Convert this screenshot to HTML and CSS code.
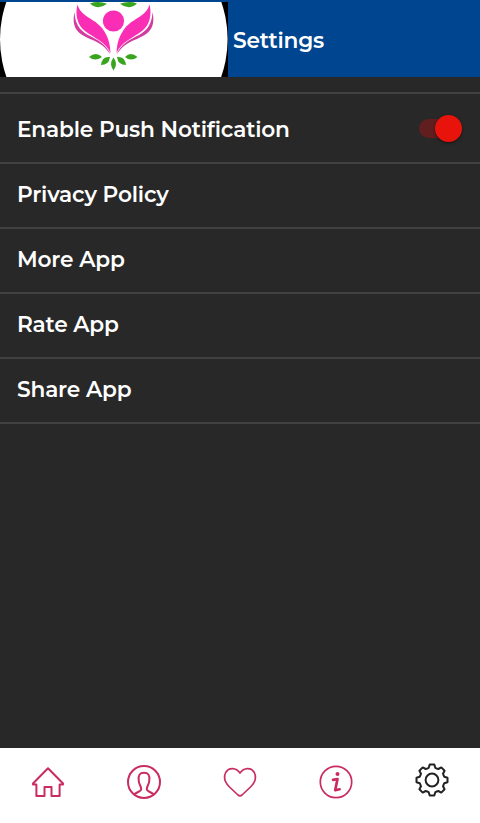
FILE: index.html
```html
<!DOCTYPE html>
<html lang="en">
<head>
<meta charset="utf-8">
<title>Settings</title>
<link rel="stylesheet" href="styles.css">
</head>
<body>
<div class="app">
  <header class="header">
    <svg class="logo" viewBox="0 2 228 75" aria-hidden="true">
      <path fill="#000" d="M0 2h228v75H0z"/>
      <circle cx="113.8" cy="39.3" r="113.8" fill="#fff"/>
      <g fill="#39a51f">
        <path d="M90 3.500Q98 .5 107 3.800Q98 11 90 3.500zM120 3.800Q129 .5 137 3.500Q129 11 120 3.800z"/>
        <path d="M89 57Q96 51 102 57Q95 62 89 57zM137.500 57Q130.500 51 125 57Q131 62 137.500 57zM101 65Q102 56 110 57Q109 65 101 65zM126 65Q125 56 117 57Q118 65 126 65zM113.500 57.500Q108.500 64 113.500 70.500Q118.500 64 113.500 57.500z"/>
      </g>
      <circle cx="113.500" cy="21" r="10.600" fill="#f92eb4"/>
      <g fill="#f92eb4">
        <path d="M77.500 4.500C81 17 94 18 102 28C108 36 110 43 110.500 53C106 42 94 38 85 31C77 25 75 14 77.500 4.500z"/>
        <path d="M149.500 4.500C146 17 133 18 125 28C119 36 117 43 116.500 53C121 42 133 38 142 31C150 25 152 14 149.500 4.500z"/>
      </g>
      <g fill="#d33b9f">
        <path d="M74.500 12C71 29 79 34 90 39C101 43 106 48 110.500 54.500C106 44 98 40 88 35C79 30 75 23 74.500 12z"/>
        <path d="M152.500 12C156 29 148 34 137 39C126 43 121 48 116.500 54.500C121 44 129 40 139 35C148 30 152 23 152.500 12z"/>
      </g>
    </svg>
    <h1 class="title">Settings</h1>
  </header>
  <main class="list">
    <div class="row row-push"><span class="label">Enable Push Notification</span><span class="switch"></span></div>
    <div class="row"><span class="label">Privacy Policy</span></div>
    <div class="row"><span class="label">More App</span></div>
    <div class="row"><span class="label">Rate App</span></div>
    <div class="row"><span class="label">Share App</span></div>
  </main>
  <nav class="nav">
    <a class="tab"><svg class="icon" viewBox="-18 -18 36 36"><path d="M0-13.800L-15 1.500V2.400H-11.600V14H-3.500V5.100H3.500V14H11.600V2.400H15V1.500Z"/></svg></a>
    <a class="tab"><svg class="icon" viewBox="-18 -18 36 36"><circle r="16"/><path d="M-9.800 12.300C-6 9.500-2.800 9.500-2.800 7C-2.800 4-5 3-5.300-1.500C-6-7-4-9.300 0-9.300S6-7 5.300-1.500C5 3 2.800 4 2.800 7C2.800 9.500 6 9.500 9.800 12.300"/></svg></a>
    <a class="tab"><svg class="icon heart" viewBox="-18 -18 36 36"><path d="M0-9C-4-14.500-11-15-14.300-9.500C-17-4-14.500 1-10.500 5L-2 13Q0 14.600 2 13L10.500 5C14.500 1 17-4 14.300-9.500C11-15 4-14.500 0-9Z"/></svg></a>
    <a class="tab"><svg class="icon info" viewBox="-18 -18 36 36"><circle r="15.700"/><circle class="dot" cx="1.500" cy="-8" r="2"/><path class="stem" d="M-3-2.200L1.500-3L-.8 8.300L3.600 7.300"/></svg></a>
    <a class="tab"><svg class="icon gear" viewBox="-18 -18 36 36"><circle r="6.400"/><path d="M-2.300-15.500H2.300L3.300-12.200Q5-11.500 6.300-11L9.300-12.600L12.600-9.300L11-6.300Q11.500-5 12.200-3.300L15.500-2.300V2.300L12.200 3.300Q11.500 5 11 6.300L12.600 9.300L9.300 12.600L6.300 11Q5 11.500 3.300 12.200L2.300 15.500H-2.300L-3.300 12.200Q-5 11.500-6.300 11L-9.300 12.600L-12.600 9.300L-11 6.300Q-11.500 5-12.200 3.300L-15.500 2.300V-2.300L-12.200-3.300Q-11.500-5-11-6.300L-12.600-9.300L-9.300-12.600L-6.300-11Q-5-11.500-3.300-12.200Z"/></svg></a>
  </nav>
</div>
</body>
</html>
```
FILE: styles.css
```css
* { box-sizing: border-box; }
body { margin: 0; background: #282828; }
.app {
  width: 480px;
  height: 823px;
  display: flex;
  flex-direction: column;
  overflow: hidden;
  background: #282828;
  color: #fff;
  font-family: Montserrat, Inter, sans-serif;
}
.header {
  height: 77px;
  padding-top: 2px;
  display: flex;
  align-items: center;
  background: #00458f;
  flex: none;
}
.logo { width: 228px; height: 75px; display: block; }
.title {
  margin: 0 0 0 5px;
  font-size: 21.7px;
  font-weight: 600;
  line-height: 30px;
  letter-spacing: -0.2px;
}
.list {
  flex: 1;
  margin-top: 15px;
  border-top: 2px solid #414141;
}
.row {
  height: 65px;
  padding: 0 18px 4px 17px;
  display: flex;
  align-items: center;
  justify-content: space-between;
  border-bottom: 2px solid #414141;
}
.row-push { height: 70px; padding-bottom: 0; }
.label {
  font-size: 21.7px;
  font-weight: 600;
  line-height: 30px;
  letter-spacing: -0.18px;
  white-space: nowrap;
}
.row-push .label { padding-top: 1px; }
.switch {
  width: 43px;
  height: 27px;
  display: grid;
  align-items: center;
}
.switch::before,
.switch::after {
  content: "";
  grid-area: 1 / 1;
}
.switch::before {
  width: 36px;
  height: 19px;
  border-radius: 10px;
  background: #601f1e;
}
.switch::after {
  justify-self: end;
  width: 27px;
  height: 27px;
  border-radius: 50%;
  background: #e8140c;
  box-shadow: 0 1px 3px rgba(0, 0, 0, 0.5);
}
.nav {
  height: 75px;
  flex: none;
  display: grid;
  grid-template-columns: repeat(5, 1fr);
  background: #fff;
}
.tab { display: flex; justify-content: center; padding-top: 16px; }
.icon {
  width: 36px;
  height: 36px;
  fill: none;
  stroke: #c92c62;
  stroke-width: 2;
  stroke-linejoin: round;
  stroke-linecap: round;
}
.heart, .info { stroke-width: 1.7; }
.info .dot { fill: #c92c62; stroke: none; }
.info .stem { stroke-width: 2.7; }
.gear { stroke: #222; margin-top: -2px; }
```
